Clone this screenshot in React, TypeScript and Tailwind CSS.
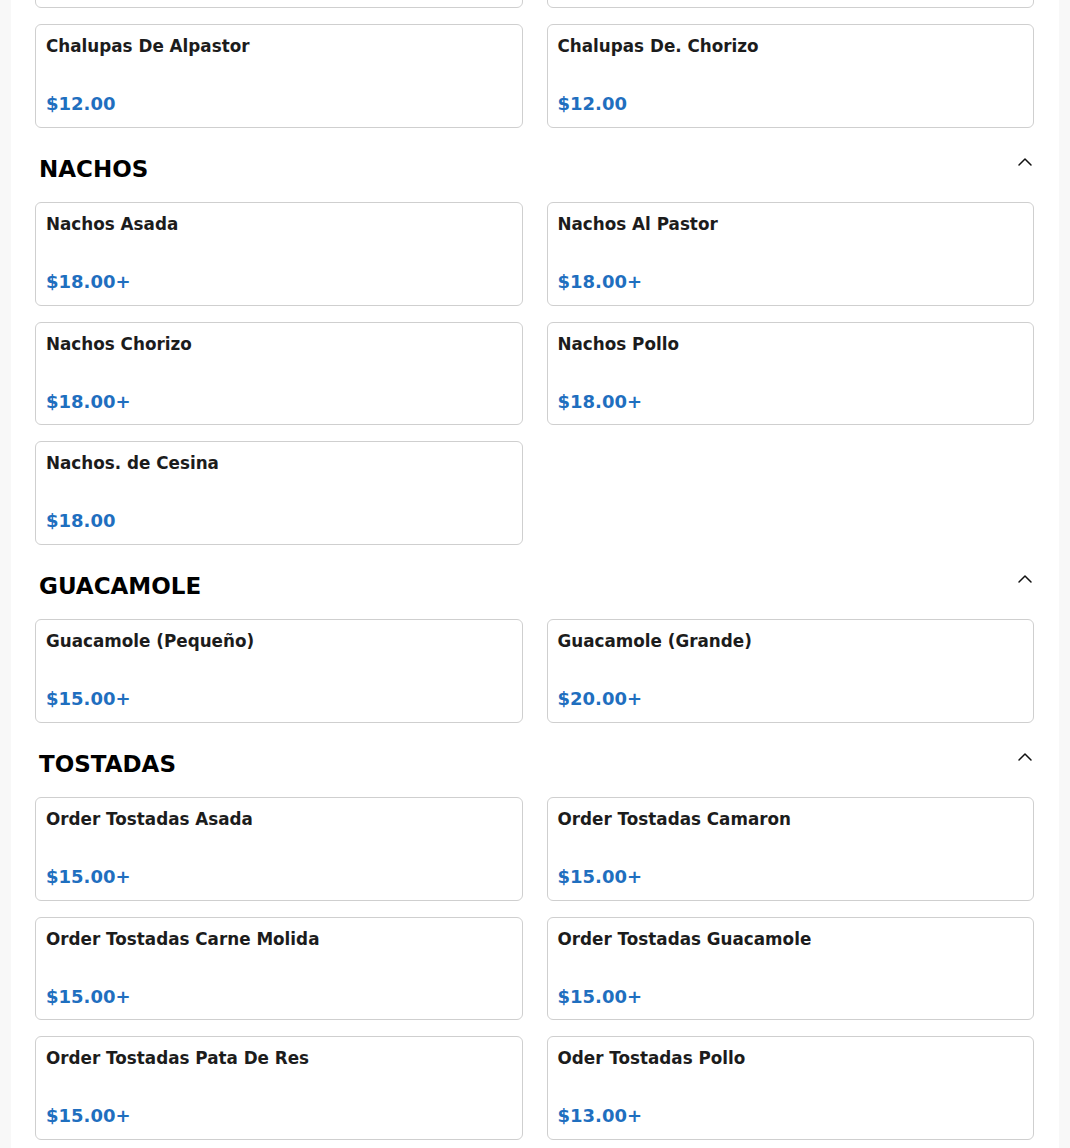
import { ChevronUp } from 'lucide-react';

type Item = { name: string; price: string };
type Section = { title: string; items: Item[] };

const sections: Section[] = [
  {
    title: 'NACHOS',
    items: [
      { name: 'Nachos Asada', price: '$18.00+' },
      { name: 'Nachos Al Pastor', price: '$18.00+' },
      { name: 'Nachos Chorizo', price: '$18.00+' },
      { name: 'Nachos Pollo', price: '$18.00+' },
      { name: 'Nachos. de Cesina', price: '$18.00' },
    ],
  },
  {
    title: 'GUACAMOLE',
    items: [
      { name: 'Guacamole (Pequeño)', price: '$15.00+' },
      { name: 'Guacamole (Grande)', price: '$20.00+' },
    ],
  },
  {
    title: 'TOSTADAS',
    items: [
      { name: 'Order Tostadas Asada', price: '$15.00+' },
      { name: 'Order Tostadas Camaron', price: '$15.00+' },
      { name: 'Order Tostadas Carne Molida', price: '$15.00+' },
      { name: 'Order Tostadas Guacamole', price: '$15.00+' },
      { name: 'Order Tostadas Pata De Res', price: '$15.00+' },
      { name: 'Oder Tostadas Pollo', price: '$13.00+' },
    ],
  },
];

// previous section (scrolled past) – only its last rows show
const chalupas: Item[] = [
  { name: 'Chalupas De Asada', price: '$12.00' },
  { name: 'Chalupas De Pollo', price: '$12.00' },
  { name: 'Chalupas De Alpastor', price: '$12.00' },
  { name: 'Chalupas De. Chorizo', price: '$12.00' },
];

function ItemCard({ item }: { item: Item }) {
  return (
    <div className="bg-white border border-[#cfcfcf] rounded-[6px] px-[10px] pt-[11px] pb-[9px] flex flex-col">
      <h3 className="text-[16.8px] leading-[20px] font-bold text-[#1c1c1c] mb-[34px]">{item.name}</h3>
      <span className="text-[18px] leading-[27.5px] font-bold text-[#1f6fbf]">{item.price}</span>
    </div>
  );
}

export default function App() {
  return (
    <div className="min-h-screen bg-[#f8f8f8] overflow-hidden" style={{ fontFamily: '"DejaVu Sans", Verdana, sans-serif' }}>
      <div className="max-w-[1048px] mx-auto bg-white pl-6 pr-[25px] pb-10">
        <div className="-mt-[95.5px] grid grid-cols-2 gap-x-6 gap-y-4">
          {chalupas.map((item) => (
            <ItemCard key={item.name} item={item} />
          ))}
        </div>

        {sections.map((section) => (
          <section key={section.title} className="mt-[22.5px]">
            <div className="flex items-start justify-between mb-[16px]">
              <h2 className="text-[23px] leading-[34px] pt-[2px] font-bold text-black pl-1">{section.title}</h2>
              <button className="-mr-[3px] text-[#111]">
                <ChevronUp size={24} strokeWidth={1.5} />
              </button>
            </div>
            <div className="grid grid-cols-2 gap-x-6 gap-y-4">
              {section.items.map((item) => (
                <ItemCard key={item.name} item={item} />
              ))}
            </div>
          </section>
        ))}
      </div>
    </div>
  );
}
